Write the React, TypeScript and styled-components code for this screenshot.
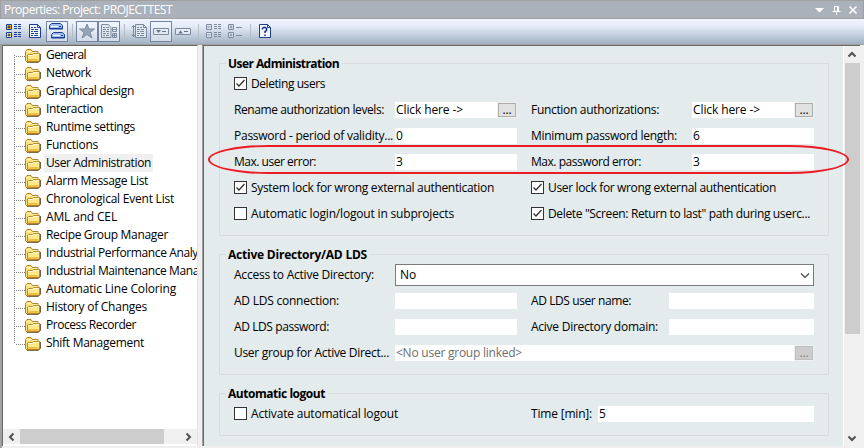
import React, { useLayoutEffect, useRef, useState } from "react";
import styled, { createGlobalStyle } from "styled-components";

const Global = createGlobalStyle`
  * { box-sizing: border-box; }
  body { margin: 0; background: #f0f0f0; overflow: hidden; }
`;

const Window = styled.div`
  width: 864px;
  height: 448px;
  display: flex;
  flex-direction: column;
  background: #f0f0f0;
  font: 12px/18px "Open Sans", "Noto Sans", sans-serif;
  color: #000;
  overflow: hidden;
`;

const TitleBar = styled.header`
  height: 19px;
  flex: none;
  display: flex;
  align-items: center;
  justify-content: space-between;
  padding: 0 5px 0 3px;
  border: 1px solid #a0a0a0;
  background: #abb1bb;
  color: #fff;
`;

const Toolbar = styled.div`
  height: 25px;
  flex: none;
  display: flex;
  align-items: center;
  padding: 0 2px 1px;
  background: linear-gradient(#f0f5fe 0, #e6eefa 25%, #a3b1c2 100%);
`;

const ToolButton = styled.span<{ $on?: boolean }>`
  width: 22px;
  height: 21px;
  display: flex;
  align-items: center;
  justify-content: center;
  border: 1px solid ${(p) => (p.$on ? "#75859f" : "transparent")};
  background: ${(p) => (p.$on ? "rgba(240,246,255,.55)" : "none")};
  svg { flex: none; }
`;

const Separator = styled.span`
  width: 1px;
  height: 15px;
  margin: 0 3px 0 4px;
  background: #b6bcc5;
`;

const Body = styled.main`
  flex: 1;
  min-height: 0;
  display: flex;
  border-left: 2px solid #a0a0a0;
  border-top: 1px solid #a0a0a0;
`;

const TreePane = styled.nav`
  width: 196px;
  height: 401px;
  flex: none;
  display: flex;
  flex-direction: column;
  border-left: 1px solid #696969;
  border-top: 1px solid #696969;
  border-right: 1px solid #e3e3e3;
  background: #fff;
  overflow: hidden;
`;

const TreeRows = styled.div`
  height: 383px;
  flex: none;
  overflow: hidden;
`;

const TreeRow = styled.div<{ $end?: "first" | "last" }>`
  height: 18px;
  display: flex;
  align-items: center;
  white-space: nowrap;
  padding-left: 11px;
  > * { flex: none; }
  &::before {
    content: "";
    flex: none;
    width: 1px;
    height: ${(p) => (p.$end ? "9px" : "18px")};
    align-self: ${(p) => (p.$end === "first" ? "flex-end" : "flex-start")};
    background: repeating-linear-gradient(#808080 0 1px, transparent 1px 2px);
  }
`;

const Branch = styled.span`
  width: 10px;
  height: 1px;
  margin-top: 2px;
  background: repeating-linear-gradient(90deg, transparent 0 1px, #808080 1px 2px);
`;

const TreeLabel = styled.span<{ $selected?: boolean }>`
  height: 18px;
  line-height: 18px;
  margin-left: 2px;
  padding: 0 2px;
  background: ${(p) => (p.$selected ? "#f0f0f0" : "none")};
`;

const HScroll = styled.div`
  height: 15px;
  display: flex;
  align-items: center;
  background: #f0f0f0;
`;

const HThumb = styled.div`
  width: 144px;
  height: 15px;
  margin-right: 15px;
  background: #cdcdcd;
`;

const ScrollButton = styled.span`
  width: 17px;
  height: 17px;
  flex: none;
  display: flex;
  align-items: center;
  justify-content: center;
`;

const Content = styled.section`
  width: 658px;
  height: 401px;
  margin-left: 4px;
  display: flex;
  border-left: 1px solid #a0a0a0;
  border-top: 1px solid #696969;
  flex: none;
`;

const Form = styled.div`
  position: relative;
  width: 640px;
  border-left: 1px solid #696969;
  background: #e3ebec;
  padding: 8px 0 0 15px;
`;

const VScroll = styled.div`
  width: 17px;
  display: flex;
  flex-direction: column;
  align-items: center;
  background: #f0f0f0;
  border-left: 1px solid #fff;
`;

const VThumb = styled.div`
  width: 15px;
  height: 271px;
  margin-bottom: auto;
  background: #cdcdcd;
`;

const Group = styled.fieldset<{ $h: number }>`
  width: 610px;
  height: ${(p) => p.$h}px;
  margin: 0 0 9px;
  padding: 0 14px;
  min-width: 0;
  border: 1px solid #d9dcdc;
`;

const Legend = styled.legend`
  height: 19px;
  line-height: 19px;
  margin-left: -8px;
  padding: 0 3px 0 2px;
  font-weight: 700;
  white-space: nowrap;
`;

const Row = styled.div<{ $first?: boolean }>`
  height: ${(p) => (p.$first ? 24 : 26)}px;
  margin: ${(p) => (p.$first ? "-1px 0 1px" : "0")};
  display: flex;
  align-items: center;
  white-space: nowrap;
`;

const Cell = styled.div<{ $w: number }>`
  width: ${(p) => p.$w}px;
  flex: none;
  display: flex;
  align-items: center;
`;

const Field = styled.div<{ $w: number; $muted?: boolean }>`
  width: ${(p) => p.$w}px;
  height: 16px;
  flex: none;
  display: flex;
  align-items: center;
  justify-content: space-between;
  padding-left: 1px;
  background: #fff;
  color: ${(p) => (p.$muted ? "#6d6d6d" : "#000")};
`;

const More = styled.span<{ $disabled?: boolean }>`
  width: 20px;
  height: 16px;
  line-height: 10px;
  display: flex;
  align-items: flex-end;
  justify-content: center;
  padding-bottom: 2px;
  border: 1px solid #f0f0f0;
  outline: 1px solid ${(p) => (p.$disabled ? "#bfbfbf" : "#adadad")};
  outline-offset: -2px;
  background: ${(p) => (p.$disabled ? "#cccccc" : "#e1e1e1")};
  color: ${(p) => (p.$disabled ? "#838383" : "#000")};
`;

const Select = styled.div`
  width: 419px;
  height: 22px;
  display: flex;
  align-items: center;
  justify-content: space-between;
  padding: 0 3px 0 4px;
  border: 1px solid #7a7a7a;
  background: #fff;
`;

const Box = styled.span`
  width: 13px;
  height: 13px;
  flex: none;
  display: flex;
  margin: -1px 4px 0 0;
  border: 1px solid #333;
  background: #fff;
`;

const Highlight = styled.div`
  position: absolute;
  left: 4px;
  top: 99px;
  width: 641px;
  height: 29px;
  border: 2px solid #ed1c24;
  border-radius: 60px / 14.5px;
  z-index: 2;
`;

const Run = styled.span`
  display: inline-block;
  white-space: pre;
`;

/** Text tracked so that its advance is exactly `w` pixels. */
function T({ w, children }: { w: number; children: string }) {
  const ref = useRef<HTMLSpanElement>(null);
  const [spacing, setSpacing] = useState(0);
  useLayoutEffect(() => {
    const natural = ref.current!.getBoundingClientRect().width;
    setSpacing((w - natural) / children.length);
  }, [w, children]);
  return <Run ref={ref} style={{ letterSpacing: spacing }}>{children}</Run>;
}

function Folder() {
  return (
    <svg width="17" height="15" viewBox="1 0 17 15" fill="none">
      <path d="M1.500 3.500 3 1.500h4l1.500 2h5.500v2h1.500v7L14 14H3l-1.500-1.500z" fill="#fbe27a" stroke="#b5822a" />
      <path d="M3 3.500h4M8.500 4.500h5" stroke="#fff3b0" />
      <path d="M3.500 13V7l1-.5h4l1-1h6V12l-1.500 1.500z" fill="#ffe889" stroke="#c08a26" />
      <path d="M4.500 7.500h4l1-1h5" stroke="#fffbd8" />
      <path d="M4.500 11.500h10M4.500 12.500h9" stroke="#f0c040" />
      <path d="M3 14.300h11.500l2-2V6" stroke="#5f4c30" strokeWidth=".9" />
    </svg>
  );
}

const NAVY = "#1c3f94";
const GRAY = "#7c8a9e";

function Svg({ children }: { children: React.ReactNode }) {
  return <svg width="16" height="16" viewBox="0 0 16 16" fill="none">{children}</svg>;
}

function Tree2({ c, a, b, dashed }: { c: string; a: string; b: string; dashed?: boolean }) {
  const minus = dashed && c === GRAY;
  return (
    <Svg>
      <path d="M1.5 1.5h5v5h-5z" fill={a} stroke={c} />
      <path d="M1.5 9.5h5v5h-5z" fill={b} stroke={c} />
      <path d={minus ? "M2.5 4h3M2.5 12h3" : "M2.5 4h3M4 2.5v3M2.5 12h3M4 10.5v3"} stroke={c === NAVY ? "#222" : c} />
      {dashed
        ? <path d="M9 1.5h3m1 0h3M9 3.5h3m1 0h3M9 5.5h3m1 0h3M9 9.5h3m1 0h3M9 11.5h3m1 0h3M9 13.5h3m1 0h3" stroke={c} />
        : <path d="M9 4.5h6M9 12.5h6" stroke={c} />}
    </Svg>
  );
}

function Page({ c, x = 2 }: { c: string; x?: number }) {
  return (
    <g transform={`translate(${x} 0)`}>
      <path d="M.5 1.5h8l3 3v10H.5z" fill={c === NAVY ? "#f3f7ff" : "#dfe6f0"} stroke={c} />
      <path d="M8.5 1.5v3h3M2 4.5h2m1 0h2M2 6.5h3m1 0h3M2 8.5h2m1 0h4M2 10.5h3m1 0h3M2 12.5h2m1 0h4" stroke={c} />
    </g>
  );
}

function Bar({ up }: { up?: boolean }) {
  return (
    <Svg>
      <path d="M.5 5.5h15v6H.5z" fill="#e3eaf4" stroke={GRAY} />
      <path d={up ? "M3 10.5h5l-2.5-3z" : "M3 7h5l-2.5 3z"} fill="#66748a" />
      <path d="M9 8.5h4" stroke="#66748a" />
    </Svg>
  );
}

function Check({ on }: { on?: boolean }) {
  return (
    <Box>
      {on && (
        <svg width="11" height="11" viewBox="0 0 11 11" fill="none">
          <path d="M1.500 5.500 4 8l5.500-6" stroke="#333" strokeWidth="1.300" />
        </svg>
      )}
    </Box>
  );
}

function Chevron({ dir }: { dir: "left" | "right" | "up" | "down" }) {
  const d = {
    left: "M6.500 1.500 3 5l3.500 3.500",
    right: "M3.500 1.500 7 5 3.500 8.500",
    up: "M1.500 6.500 5 3l3.500 3.500",
    down: "M1.500 3.500 5 7l3.500-3.500",
  }[dir];
  return (
    <svg width="10" height="10" viewBox="0 0 10 10" fill="none">
      <path d={d} stroke="#505050" strokeWidth="2" />
    </svg>
  );
}

const tree: [string, number][] = [
  ["General", 40], ["Network", 45], ["Graphical design", 88], ["Interaction", 57],
  ["Runtime settings", 89], ["Functions", 52], ["User Administration", 105],
  ["Alarm Message List", 102], ["Chronological Event List", 128], ["AML and CEL", 71],
  ["Recipe Group Manager", 122], ["Industrial Performance Analy", 152],
  ["Industrial Maintenance Mana", 153], ["Automatic Line Coloring", 130],
  ["History of Changes", 101], ["Process Recorder", 90], ["Shift Management", 98],
];

export default function App() {
  return (
    <Window>
      <Global />
      <TitleBar>
        <T w={168}>Properties: Project: PROJECTTEST</T>
        <svg width="44" height="12" viewBox="0 0 44 12" fill="none">
          <path d="M1 4h9L5.500 8.500z" fill="#fff" />
          <path d="M20.500 7V2.500h4V7M18.500 7.500h8M22.500 8v3M23.500 2v5" stroke="#fff" />
          <path d="m35.500 2.500 7 7m0-7-7 7" stroke="#fff" strokeWidth="1.700" />
        </svg>
      </TitleBar>
      <Toolbar>
        <ToolButton><Tree2 c={NAVY} a="#ffc400" b="#fff9b8" dashed /></ToolButton>
        <ToolButton><Svg><Page c={NAVY} /></Svg></ToolButton>
        <ToolButton $on>
          <svg width="18" height="18" viewBox="0 0 18 18" fill="none">
            <path d="M3.500 1.500h9l2 2v3.500h-13V3.500zM5.500 10.500h9l2 2v3.500h-13v-3.500z" fill="#9fc0f3" stroke={NAVY} />
            <path d="M1.500 6.500h13M3.500 15.500h13" stroke={NAVY} />
            <path d="M3 4.500h7M5 13.500h7" stroke="#fff" />
            <path d="M11 4.500h2M13 13.500h2" stroke={NAVY} />
          </svg>
        </ToolButton>
        <Separator />
        <ToolButton $on>
          <Svg><path d="m8 1 2 5h5.500L11 9.500l2 5.500-5-3.500L3 15l2-5.500L.5 6H6z" fill="#97a4b6" stroke="#7f8da1" /></Svg>
        </ToolButton>
        <ToolButton $on>
          <Svg>
            <path d="M.5 1.500h7l2.500 3v10H.5z" fill="#dfe6f0" stroke={GRAY} />
            <path d="M2 4.500h2m1 0h3M2 6.500h3m1 0h2M2 8.500h2m1 0h3M2 10.500h3m1 0h2M2 12.500h2m1 0h3M11.500 4.500h4v4h-4zM11.500 10.500h4v4h-4zM12 6.500h3M12 12.500h3M13.500 11v3" stroke={GRAY} />
          </Svg>
        </ToolButton>
        <Separator />
        <ToolButton>
          <Svg><Page c={GRAY} x={4} /><path d="M2.500 2v12M.5 4.500l2-2 2 2M.5 11.500l2 2 2-2" stroke={GRAY} /></Svg>
        </ToolButton>
        <ToolButton $on><Bar /></ToolButton>
        <ToolButton><Bar up /></ToolButton>
        <Separator />
        <ToolButton><Tree2 c={GRAY} a="#dfe6f0" b="#dfe6f0" dashed /></ToolButton>
        <ToolButton><Tree2 c={GRAY} a="#dfe6f0" b="#dfe6f0" /></ToolButton>
        <Separator />
        <ToolButton>
          <Svg>
            <path d="M2.500 1.500h8l3 3v10h-11z" fill="#f3f7ff" stroke={NAVY} />
            <path d="M10.500 1.500v3h3" stroke={NAVY} />
            <path d="M5.500 6.500V5.500l1-1h2l1 1v2L8 8.500V10M8 11.500v1.500" stroke="#12309a" strokeWidth="1.500" />
          </Svg>
        </ToolButton>
      </Toolbar>
      <Body>
        <TreePane>
          <TreeRows>
            {tree.map(([name, w], i) => (
              <TreeRow key={name} $end={i === 0 ? "first" : i === tree.length - 1 ? "last" : undefined}>
                <Branch />
                <Folder />
                <TreeLabel $selected={name === "User Administration"}><T w={w}>{name}</T></TreeLabel>
              </TreeRow>
            ))}
          </TreeRows>
          <HScroll>
            <ScrollButton><Chevron dir="left" /></ScrollButton>
            <HThumb />
            <ScrollButton><Chevron dir="right" /></ScrollButton>
          </HScroll>
        </TreePane>
        <Content>
          <Form>
            <Highlight />
            <Group $h={182}>
              <Legend><T w={111}>User Administration</T></Legend>
              <Row $first><Check on /><T w={74}>Deleting users</T></Row>
              <Row>
                <Cell $w={161}><T w={150}>Rename authorization levels:</T></Cell>
                <Cell $w={136}><Field $w={122}><T w={67}>{"Click here ->"}</T><More><T w={9}>...</T></More></Field></Cell>
                <Cell $w={161}><T w={128}>Function authorizations:</T></Cell>
                <Field $w={122}><T w={67}>{"Click here ->"}</T><More><T w={9}>...</T></More></Field>
              </Row>
              <Row>
                <Cell $w={161}><T w={159}>Password - period of validity...</T></Cell>
                <Cell $w={136}><Field $w={122}><T w={7}>0</T></Field></Cell>
                <Cell $w={161}><T w={146}>Minimum password length:</T></Cell>
                <Field $w={122}><T w={7}>6</T></Field>
              </Row>
              <Row>
                <Cell $w={161}><T w={82}>Max. user error:</T></Cell>
                <Cell $w={136}><Field $w={122}><T w={7}>3</T></Field></Cell>
                <Cell $w={161}><T w={110}>Max. password error:</T></Cell>
                <Field $w={122}><T w={7}>3</T></Field>
              </Row>
              <Row>
                <Cell $w={297}><Check on /><T w={243}>System lock for wrong external authentication</T></Cell>
                <Check on /><T w={228}>User lock for wrong external authentication</T>
              </Row>
              <Row>
                <Cell $w={297}><Check /><T w={203}>Automatic login/logout in subprojects</T></Cell>
                <Check on /><T w={262}>{'Delete "Screen: Return to last" path during userc...'}</T>
              </Row>
            </Group>
            <Group $h={130}>
              <Legend><T w={139}>Active Directory/AD LDS</T></Legend>
              <Row $first>
                <Cell $w={161}><T w={140}>Access to Active Directory:</T></Cell>
                <Select>
                  <T w={16}>No</T>
                  <svg width="10" height="10" viewBox="0 0 10 10" fill="none"><path d="m1 3.500 4 4 4-4" stroke="#444" strokeWidth="1.200" /></svg>
                </Select>
              </Row>
              <Row>
                <Cell $w={161}><T w={105}>AD LDS connection:</T></Cell>
                <Cell $w={136}><Field $w={122} /></Cell>
                <Cell $w={138}><T w={100}>AD LDS user name:</T></Cell>
                <Field $w={145} />
              </Row>
              <Row>
                <Cell $w={161}><T w={95}>AD LDS password:</T></Cell>
                <Cell $w={136}><Field $w={122} /></Cell>
                <Cell $w={138}><T w={127}>Acive Directory domain:</T></Cell>
                <Field $w={145} />
              </Row>
              <Row>
                <Cell $w={161}><T w={155}>User group for Active Direct...</T></Cell>
                <Field $w={419} $muted><T w={126}>{"<No user group linked>"}</T><More $disabled><T w={9}>...</T></More></Field>
              </Row>
            </Group>
            <Group $h={52}>
              <Legend><T w={97}>Automatic logout</T></Legend>
              <Row $first>
                <Cell $w={297}><Check /><T w={147}>Activate automatical logout</T></Cell>
                <Cell $w={67}><T w={61}>Time [min]:</T></Cell>
                <Field $w={216}><T w={7}>5</T></Field>
              </Row>
            </Group>
          </Form>
          <VScroll>
            <ScrollButton><Chevron dir="up" /></ScrollButton>
            <VThumb />
            <ScrollButton><Chevron dir="down" /></ScrollButton>
          </VScroll>
        </Content>
      </Body>
    </Window>
  );
}
